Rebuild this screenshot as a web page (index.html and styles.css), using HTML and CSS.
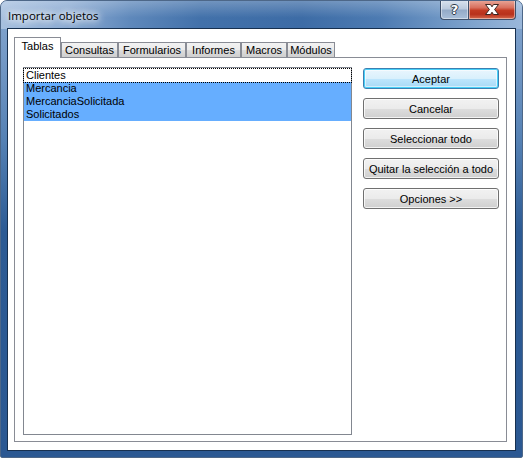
FILE: index.html
```html
<!DOCTYPE html>
<html lang="es">
<head>
    <meta charset="UTF-8">
    <meta name="viewport" content="width=device-width, initial-scale=1.0">
    <title>Importar objetos</title>
    <link rel="stylesheet" href="styles.css">
</head>
<body>
    <div class="window">
        <div class="titlebar">
            <span class="title">Importar objetos</span>
            <div class="caption-buttons">
                <div class="cap help"><span>?</span></div>
                <div class="cap close">
                    <svg width="16" height="13" viewBox="0 0 16 13">
                        <path d="M1.5 1.5 L6.5 1.5 L8 3.8 L9.5 1.5 L14.5 1.5 L10.6 6.5 L14.5 11.5 L9.5 11.5 L8 9.2 L6.5 11.5 L1.5 11.5 L5.4 6.5 Z"
                              fill="#ffffff" stroke="#3a2420" stroke-width="1" stroke-linejoin="round"/>
                    </svg>
                </div>
            </div>
        </div>

        <div class="client">
            <div class="tabs">
                <div class="tab-strip">
                    <div class="tab active" style="width: 47px">Tablas</div>
                    <div class="tab" style="width: 57px">Consultas</div>
                    <div class="tab" style="width: 68px">Formularios</div>
                    <div class="tab" style="width: 55px">Informes</div>
                    <div class="tab" style="width: 46px">Macros</div>
                    <div class="tab" style="width: 48px">Módulos</div>
                </div>

                <div class="tab-panel">
                    <div class="listbox">
                        <div class="item focused">Clientes</div>
                        <div class="item selected">Mercancia</div>
                        <div class="item selected">MercanciaSolicitada</div>
                        <div class="item selected">Solicitados</div>
                    </div>

                    <div class="actions">
                        <button class="btn default">Aceptar</button>
                        <button class="btn">Cancelar</button>
                        <button class="btn">Seleccionar todo</button>
                        <button class="btn">Quitar la selección a todo</button>
                        <button class="btn">Opciones &gt;&gt;</button>
                    </div>
                </div>
            </div>
        </div>
    </div>
</body>
</html>
```

FILE: styles.css
```css
body {
    margin: 0;
    background: #ffffff;
    font-family: "Liberation Sans", Arial, sans-serif;
    font-size: 11px;
    color: #000000;
}

/* window frame */
.window {
    width: 523px;
    height: 458px;
    box-sizing: border-box;
    display: flex;
    flex-direction: column;
    border-radius: 7px 7px 2px 2px;
    border: 1px solid #4d6788;
    background: linear-gradient(to bottom, #86a8d0 0px, #7398c5 60px, #5581b4 140px, #2d5b94 230px, #2b5892 100%);
    overflow: hidden;
}

.titlebar {
    height: 28px;
    display: flex;
    justify-content: space-between;
    align-items: flex-start;
    background:
        linear-gradient(to bottom, rgba(255,255,255,0.25), rgba(255,255,255,0) 60%),
        linear-gradient(to right, #a7c0df 0px, #8aaad2 70px, #5e88bb 130px, #4271aa 200px, #3d6ca6 300px, #4d7bb2 380px, #7ea3cd 470px, #9ab7da 100%);
}

.title {
    padding: 7px 0 0 7px;
    font-family: "Open Sans", "Noto Sans", sans-serif;
    font-size: 11.5px;
    line-height: 16px;
    color: #000000;
    text-shadow: 0 0 6px #ffffff, 0 0 8px #ffffff, 0 0 10px rgba(255,255,255,0.9);
}

.caption-buttons {
    display: flex;
    margin-top: -1px;
    margin-right: 6px;
}

.cap {
    height: 20px;
    box-sizing: border-box;
    border: 1px solid #3e506a;
    border-top: none;
    display: flex;
    align-items: center;
    justify-content: center;
    box-shadow: inset 0 0 0 1px rgba(255,255,255,0.45);
}

.help {
    width: 28px;
    border-radius: 0 0 0 4px;
    border-right: none;
    background: linear-gradient(to bottom, #dbe4ef 0%, #bccbde 45%, #94abc8 55%, #a9bfd9 100%);
}

.help span {
    font-family: "DejaVu Sans", sans-serif;
    font-weight: bold;
    font-size: 13px;
    line-height: 13px;
    color: #ffffff;
    text-shadow: -1px 0 #2f3a48, 1px 0 #2f3a48, 0 -1px #2f3a48, 0 1px #2f3a48;
}

.close {
    width: 48px;
    border-radius: 0 0 4px 0;
    background: linear-gradient(to bottom, #e9aa9c 0%, #d8705e 40%, #c23a22 55%, #b8311c 75%, #d56a4e 100%);
}

/* client area */
.client {
    flex: 1;
    margin: 0 7px 7px 7px;
    background: #ffffff;
    box-shadow: 0 0 0 1px #17304f;
    padding: 8px 8px 8px 6px;
    display: flex;
}

.tabs {
    flex: 1;
    display: flex;
    flex-direction: column;
}

.tab-strip {
    display: flex;
    align-items: flex-end;
    height: 20px;
}

.tab {
    height: 15px;
    box-sizing: border-box;
    border: 1px solid #898c95;
    border-bottom: none;
    background: linear-gradient(to bottom, #f2f2f2 0%, #ebebeb 50%, #dddddd 51%, #cfcfcf 100%);
    text-align: center;
    line-height: 14px;
    white-space: nowrap;
}

.tab.active {
    height: 21px;
    margin-bottom: -1px;
    background: #ffffff;
    line-height: 17px;
    position: relative;
    z-index: 1;
}

.tab-panel {
    flex: 1;
    border: 1px solid #898c95;
    padding: 9px 7px 6px 8px;
    display: flex;
    gap: 11px;
}

/* list of tables */
.listbox {
    width: 329px;
    box-sizing: border-box;
    border: 1px solid #828790;
    padding-top: 1px;
}

.item {
    height: 13px;
    line-height: 13px;
    padding-left: 2px;
    white-space: nowrap;
}

.item.selected {
    background: #66aeff;
}

.item.focused {
    outline: 1px dotted #000000;
    outline-offset: 0;
}

/* command buttons */
.actions {
    display: flex;
    flex-direction: column;
    gap: 9px;
    padding-top: 1px;
}

.btn {
    width: 136px;
    height: 21px;
    padding: 0;
    border: 1px solid #707070;
    border-radius: 3px;
    background: linear-gradient(to bottom, #f2f2f2 0%, #ebebeb 50%, #dddddd 51%, #cfcfcf 100%);
    box-shadow: inset 0 0 0 1px rgba(255,255,255,0.75);
    font-family: "Liberation Sans", Arial, sans-serif;
    font-size: 11px;
    color: #000000;
}

.btn.default {
    border-color: #3c7fb1;
    background: linear-gradient(to bottom, #eaf6fd 0%, #d9f0fc 50%, #bee6fd 51%, #a7d9f5 100%);
    box-shadow: inset 0 0 0 1px #48d1f9, inset 0 0 0 2px rgba(255,255,255,0.5);
}
```
